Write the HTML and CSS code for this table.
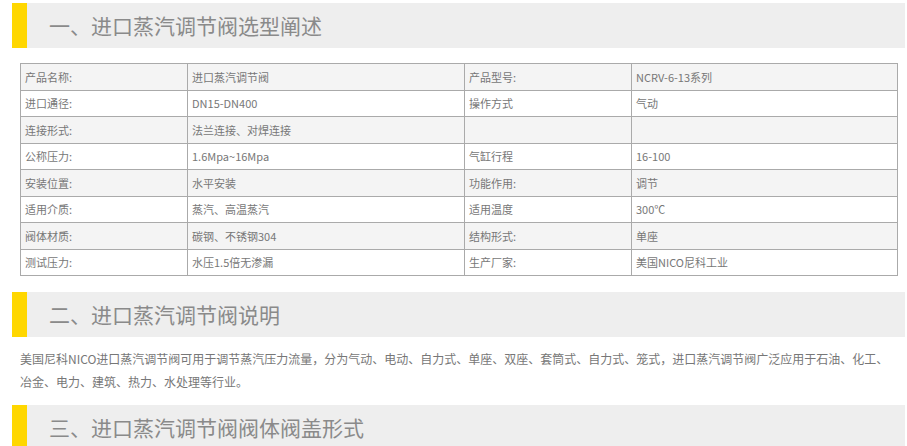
FILE: index.html
```html
<!DOCTYPE html>
<html lang="zh-CN">
<head>
<meta charset="utf-8">
<link rel="stylesheet" href="styles.css">
</head>
<body>
<div class="page">
  <h2 class="sec-title"><span class="bar"></span><span class="title-text">一、进口蒸汽调节阀选型阐述</span></h2>
  <table class="spec">
    <colgroup>
      <col class="c1"><col class="c2"><col class="c3"><col class="c4">
    </colgroup>
    <tr class="odd"><td>产品名称:</td><td>进口蒸汽调节阀</td><td>产品型号:</td><td>NCRV-6-13系列</td></tr>
    <tr><td>进口通径:</td><td>DN15-DN400</td><td>操作方式</td><td>气动</td></tr>
    <tr class="odd"><td>连接形式:</td><td>法兰连接、对焊连接</td><td></td><td></td></tr>
    <tr><td>公称压力:</td><td>1.6Mpa~16Mpa</td><td>气缸行程</td><td>16-100</td></tr>
    <tr class="odd"><td>安装位置:</td><td>水平安装</td><td>功能作用:</td><td>调节</td></tr>
    <tr><td>适用介质:</td><td>蒸汽、高温蒸汽</td><td>适用温度</td><td>300℃</td></tr>
    <tr class="odd"><td>阀体材质:</td><td>碳钢、不锈钢304</td><td>结构形式:</td><td>单座</td></tr>
    <tr><td>测试压力:</td><td>水压1.5倍无渗漏</td><td>生产厂家:</td><td>美国NICO尼科工业</td></tr>
  </table>
  <h2 class="sec-title sec-2"><span class="bar"></span><span class="title-text">二、进口蒸汽调节阀说明</span></h2>
  <p class="desc">美国尼科NICO进口蒸汽调节阀可用于调节蒸汽压力流量，分为气动、电动、自力式、单座、双座、套筒式、自力式、笼式，进口蒸汽调节阀广泛应用于石油、化工、冶金、电力、建筑、热力、水处理等行业。</p>
  <h2 class="sec-title sec-3"><span class="bar"></span><span class="title-text">三、进口蒸汽调节阀阀体阀盖形式</span></h2>
</div>
</body>
</html>
```
FILE: styles.css
```css
html, body {
  margin: 0;
  padding: 0;
  background: #fff;
}
body {
  font-family: "Noto Sans CJK SC", "Noto Sans", "Liberation Sans", sans-serif;
  color: #777;
}
.page {
  padding: 3px 0 0 12px;
  width: 893px;
}
.sec-title {
  margin: 0;
  display: flex;
  align-items: center;
  height: 45px;
  background: #eeeeee;
  font-weight: normal;
  font-size: 21px;
  color: #8a8a8a;
}
.bar {
  align-self: stretch;
  width: 15px;
  background: #ffd700;
}
.title-text {
  padding-left: 22px;
  line-height: 45px;
}
.spec {
  margin: 15px 0 0 8px;
  border-collapse: collapse;
  table-layout: fixed;
  width: 877px;
  font-size: 11px;
  color: #777;
}
.c1 { width: 167px; }
.c2 { width: 277px; }
.c3 { width: 167px; }
.c4 { width: 266px; }
.spec td {
  border: 1px solid #aaaaaa;
  height: 25.5px;
  padding: 0 4px;
  line-height: 14px;
  white-space: nowrap;
}
.spec tr.odd td {
  background: #f4f4f4;
}
.sec-2 {
  margin-top: 16px;
}
.desc {
  margin: 10px 0 0 8px;
  width: 876px;
  font-size: 12px;
  line-height: 23px;
  color: #777;
}
.sec-3 {
  margin-top: 12px;
}
```
